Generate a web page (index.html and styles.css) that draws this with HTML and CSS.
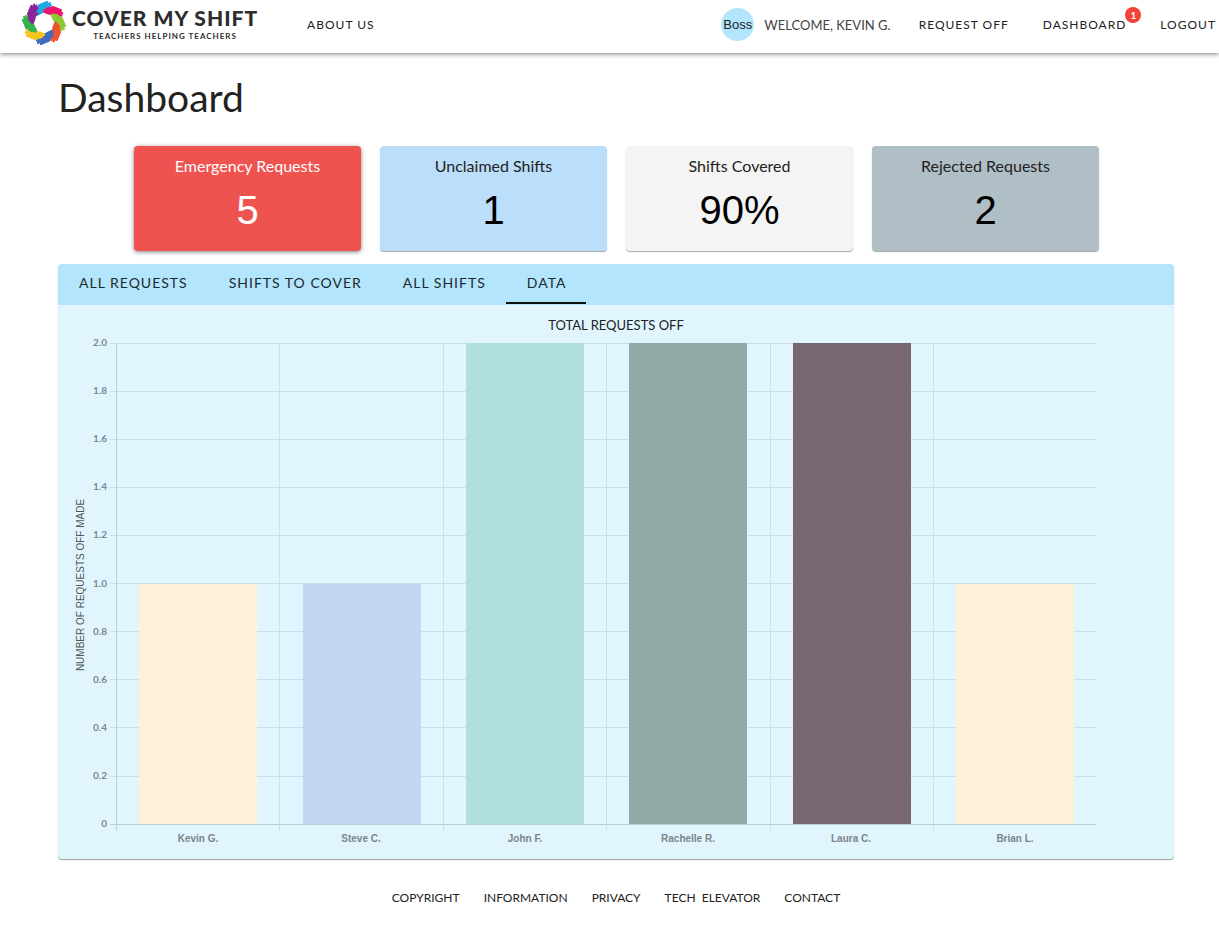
FILE: index.html
```html
<!DOCTYPE html>
<html lang="en">
<head>
<meta charset="utf-8">
<title>Cover My Shift</title>
<link rel="stylesheet" href="styles.css">
</head>
<body>
<header class="topbar">
  <a class="brand" href="#">
    <svg class="brand-mark" viewBox="-22 -22 44 44" aria-hidden="true">
      <defs>
        <g id="hand" fill="none" stroke="currentColor" stroke-linecap="round">
          <path d="M-9.500-7.500L-9-13L-5-18.500L0-20L3-17L1-11.500L-3-9L-7-7Z" fill="currentColor" stroke="none"/>
          <path d="M-5-17.500L3-21M-3-17L6-19.800M-2-15.500L7-17.600M-2-14L6-15.300" stroke-width="2.200"/>
          <path d="M-4-12L2-11.500" stroke-width="2.400"/>
        </g>
      </defs>
      <use href="#hand" color="#22a7e0"/>
      <use href="#hand" color="#ec146e" transform="rotate(45)"/>
      <use href="#hand" color="#8cc832" transform="rotate(90)"/>
      <use href="#hand" color="#ee5230" transform="rotate(135)"/>
      <use href="#hand" color="#3f6cc0" transform="rotate(180)"/>
      <use href="#hand" color="#f7c51e" transform="rotate(225)"/>
      <use href="#hand" color="#32b44a" transform="rotate(270)"/>
      <use href="#hand" color="#8a2596" transform="rotate(315)"/>
    </svg>
    <span class="brand-text">
      <span class="brand-name">COVER MY SHIFT</span>
      <span class="brand-tag">TEACHERS HELPING TEACHERS</span>
    </span>
  </a>
  <a class="nav-link" href="#">ABOUT US</a>
  <nav class="nav-right">
    <div class="user"><span class="avatar">Boss</span><span class="welcome">WELCOME, KEVIN G.</span></div>
    <a class="nav-link" href="#">REQUEST OFF</a>
    <a class="nav-link has-badge" href="#">DASHBOARD<span class="badge">1</span></a>
    <a class="nav-link" href="#">LOGOUT</a>
  </nav>
</header>
<main class="page">
  <h1 class="page-title">Dashboard</h1>
  <section class="cards">
    <article class="card card-emergency"><h2 class="card-title">Emergency Requests</h2><p class="card-value">5</p></article>
    <article class="card card-unclaimed"><h2 class="card-title">Unclaimed Shifts</h2><p class="card-value">1</p></article>
    <article class="card card-covered"><h2 class="card-title">Shifts Covered</h2><p class="card-value">90%</p></article>
    <article class="card card-rejected"><h2 class="card-title">Rejected Requests</h2><p class="card-value">2</p></article>
  </section>
  <section class="panel">
    <div class="tabs" role="tablist">
      <button class="tab" role="tab" type="button">ALL REQUESTS</button>
      <button class="tab" role="tab" type="button">SHIFTS TO COVER</button>
      <button class="tab" role="tab" type="button">ALL SHIFTS</button>
      <button class="tab tab-active" role="tab" type="button" aria-selected="true">DATA</button>
    </div>
    <div class="panel-body">
      <h2 class="chart-title">TOTAL REQUESTS OFF</h2>
      <svg class="chart" viewBox="0 0 1116 514" role="img" aria-label="Total requests off per teacher">
        <path class="grid" d="M52 7.500H1038M52 55.500H1038M52 103.500H1038M52 151.500H1038M52 199.500H1038M52 247.500H1038M52 295.500H1038M52 343.500H1038M52 391.500H1038M52 440.500H1038M221.500 7V494M385.500 7V494M548.500 7V494M712.500 7V494M875.500 7V494"/>
        <path class="axis" d="M52 488.500H1038M58.500 7V494"/>
        <rect x="81" y="248" width="118" height="240" fill="#fff0d8"/>
        <rect x="245" y="248" width="118" height="240" fill="#c3d6f2"/>
        <rect x="408" y="7" width="118" height="481" fill="#b0dfdc"/>
        <rect x="571" y="7" width="118" height="481" fill="#91a8a4"/>
        <rect x="735" y="7" width="118" height="481" fill="#796872"/>
        <rect x="898" y="248" width="118" height="240" fill="#fff0d8"/>
        <g class="tick-y">
          <text x="49" y="10">2.0</text><text x="49" y="58">1.8</text><text x="49" y="106">1.6</text>
          <text x="49" y="154">1.4</text><text x="49" y="202">1.2</text><text x="49" y="251">1.0</text>
          <text x="49" y="299">0.8</text><text x="49" y="347">0.6</text><text x="49" y="395">0.4</text>
          <text x="49" y="443">0.2</text><text x="49" y="491">0</text>
        </g>
        <g class="tick-x">
          <text x="140" y="506">Kevin G.</text><text x="303" y="506">Steve C.</text><text x="467" y="506">John F.</text>
          <text x="630" y="506">Rachelle R.</text><text x="793" y="506">Laura C.</text><text x="957" y="506">Brian L.</text>
        </g>
        <text class="axis-name" transform="translate(26 249) rotate(-90)">NUMBER OF REQUESTS OFF MADE</text>
      </svg>
    </div>
  </section>
</main>
<footer class="footer">
  <a href="#">COPYRIGHT</a>
  <a href="#">INFORMATION</a>
  <a href="#">PRIVACY</a>
  <a href="#">TECH&nbsp; ELEVATOR</a>
  <a href="#">CONTACT</a>
</footer>
</body>
</html>
```
FILE: styles.css
```css
* { box-sizing: border-box; }
body { margin: 0; background: #fff; color: #222; font-family: Lato, "Liberation Sans", sans-serif; }
a { color: inherit; text-decoration: none; }
h1, h2, p { margin: 0; font-weight: 400; }

.topbar { display: flex; align-items: center; height: 53px; padding: 0 3px 4px 22px; box-shadow: 0 1px 5px rgba(0, 0, 0, 0.5); white-space: nowrap; }
.brand { display: flex; align-items: center; gap: 6px; margin-right: 49px; padding-bottom: 4px; }
.brand-mark { display: block; width: 44px; height: 44px; }
.brand-text { display: flex; flex-direction: column; align-items: center; padding-top: 2px; color: #2d2d2d; }
.brand-name { font-size: 21px; line-height: 24px; font-weight: 900; letter-spacing: 1px; }
.brand-tag { font-size: 8px; line-height: 12px; font-weight: 700; letter-spacing: 1px; }
.nav-link { font-size: 12px; line-height: 20px; letter-spacing: 1px; }
.nav-right { display: flex; align-items: center; gap: 28px; margin-left: auto; }
.user { display: flex; align-items: center; gap: 10px; }
.avatar { width: 33px; height: 33px; border-radius: 50%; background: #b3e5fc; font: 13px/33px "Liberation Sans", sans-serif; text-align: center; }
.welcome { font-size: 13px; line-height: 20px; color: #444; }
.has-badge { position: relative; margin: 0 6px; }
.badge { position: absolute; top: -8px; right: -15px; width: 16px; height: 16px; border-radius: 50%; background: #f44336; color: #fff; font-size: 10px; line-height: 16px; font-weight: 700; letter-spacing: 0; text-align: center; }

.page { padding: 16px 45px 0 58px; }
.page-title { font-size: 39px; line-height: 56px; }
.cards { display: grid; grid-template-columns: repeat(4, 1fr); gap: 19px; padding: 21px 75px 13px 76px; }
.card { height: 105px; padding-top: 8px; border-radius: 4px; text-align: center; box-shadow: 0 1px 1px rgba(0, 0, 0, 0.35); }
.card-title { font-size: 16px; line-height: 24px; color: #222; }
.card-value { font: 40px/64px "Liberation Sans", sans-serif; color: #000; }
.card-emergency { background: #ef5350; box-shadow: 0 1px 4px rgba(0, 0, 0, 0.5); }
.card-emergency .card-title, .card-emergency .card-value { color: #fff; }
.card-unclaimed { background: #bbdefb; }
.card-covered { background: #f4f4f4; }
.card-rejected { background: #b0bec5; }

.panel { border-radius: 4px; background: #e1f5fe; box-shadow: 0 1px 1px rgba(0, 0, 0, 0.4); overflow: hidden; }
.tabs { display: flex; height: 41px; padding-bottom: 1px; background: #b3e5fc; }
.tab { padding: 0 20px 0 21px; border: 0; border-bottom: 2px solid transparent; background: none; color: #1c2a30; font: 14px/20px Lato, sans-serif; letter-spacing: 1px; cursor: pointer; }
.tab-active { border-bottom-color: #111; }
.panel-body { padding: 10px 0 9px; }
.chart-title { font-size: 13px; line-height: 21px; text-align: center; }
.chart { display: block; width: 100%; height: auto; }
.grid { fill: none; stroke: #cbdfe8; }
.axis { fill: none; stroke: #bacdd6; }
.tick-y { font: 700 10px Lato, sans-serif; fill: #7b878d; text-anchor: end; }
.tick-x { font: 700 10px "Liberation Sans", sans-serif; fill: #7b858a; text-anchor: middle; }
.axis-name { font: 10px "Liberation Sans", sans-serif; fill: #555; text-anchor: middle; }

.footer { display: flex; justify-content: center; gap: 24px; padding: 29px 0 16px 13px; font-size: 12px; line-height: 20px; }
```
